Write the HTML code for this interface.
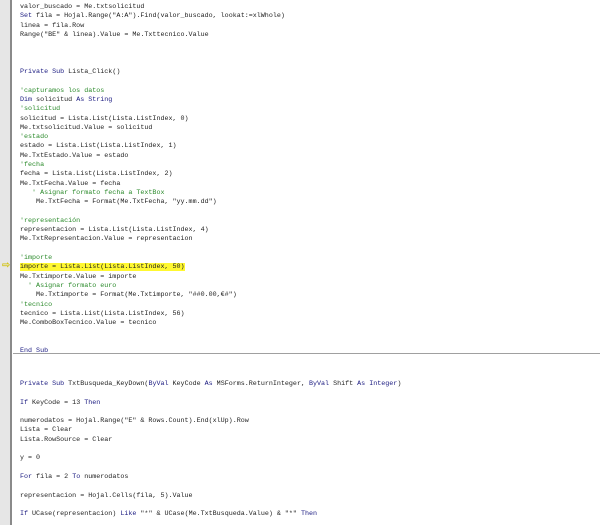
<!DOCTYPE html>
<html><head><meta charset="utf-8"><style>
html,body{margin:0;padding:0;width:600px;height:525px;overflow:hidden;background:#fff}
.m{position:absolute;left:0;top:0;width:10px;height:525px;background:#e6e6e6}
.ml{position:absolute;left:10px;top:0;width:2px;height:525px;background:#8a8a8a}
.code{position:absolute;left:20px;font-family:"Liberation Mono",monospace;font-size:6.7px;line-height:9.3px;white-space:pre;color:#222}
.k{color:#1a1a80}.c{color:#2a8a2a}
.hl{background:#fff830}
.sep{position:absolute;left:13px;top:353px;width:587px;height:1px;background:#a0a0a0}
.arrow{position:absolute;left:2px;top:261px;font-size:10px;color:#d0c000;font-family:"DejaVu Sans",sans-serif;line-height:10px;font-weight:bold}
</style></head><body>
<div class="m"></div><div class="ml"></div>
<div class="arrow">⇨</div>
<div class="code" style="top:3px">valor_buscado = Me.txtsolicitud
<span class="k">Set</span> fila = Hojal.Range("A:A").Find(valor_buscado, lookat:=xlWhole)
linea = fila.Row
Range("BE" &amp; linea).Value = Me.Txttecnico.Value



<span class="k">Private Sub</span> Lista_Click()

<span class="c">'capturamos los datos</span>
<span class="k">Dim</span> solicitud <span class="k">As String</span>
<span class="c">'solicitud</span>
solicitud = Lista.List(Lista.ListIndex, 0)
Me.txtsolicitud.Value = solicitud
<span class="c">'estado</span>
estado = Lista.List(Lista.ListIndex, 1)
Me.TxtEstado.Value = estado
<span class="c">'fecha</span>
fecha = Lista.List(Lista.ListIndex, 2)
Me.TxtFecha.Value = fecha
<span class="c">   ' Asignar formato fecha a TextBox</span>
    Me.TxtFecha = Format(Me.TxtFecha, "yy.mm.dd")

<span class="c">'representación</span>
representacion = Lista.List(Lista.ListIndex, 4)
Me.TxtRepresentacion.Value = representacion

<span class="c">'importe</span>
<span class="hl">importe = Lista.List(Lista.ListIndex, 50)</span>
Me.Txtimporte.Value = importe
<span class="c">  ' Asignar formato euro</span>
    Me.Txtimporte = Format(Me.Txtimporte, "##0.00,€#")
<span class="c">'tecnico</span>
tecnico = Lista.List(Lista.ListIndex, 56)
Me.ComboBoxTecnico.Value = tecnico


<span class="k">End Sub</span></div>
<div class="sep"></div>
<div class="code" style="top:380px"><span class="k">Private Sub</span> TxtBusqueda_KeyDown(<span class="k">ByVal</span> KeyCode <span class="k">As</span> MSForms.ReturnInteger, <span class="k">ByVal</span> Shift <span class="k">As Integer</span>)

<span class="k">If</span> KeyCode = 13 <span class="k">Then</span>

numerodatos = Hojal.Range("E" &amp; Rows.Count).End(xlUp).Row
Lista = Clear
Lista.RowSource = Clear

y = 0

<span class="k">For</span> fila = 2 <span class="k">To</span> numerodatos

representacion = Hojal.Cells(fila, 5).Value

<span class="k">If</span> UCase(representacion) <span class="k">Like</span> "*" &amp; UCase(Me.TxtBusqueda.Value) &amp; "*" <span class="k">Then</span></div>
</body></html>
